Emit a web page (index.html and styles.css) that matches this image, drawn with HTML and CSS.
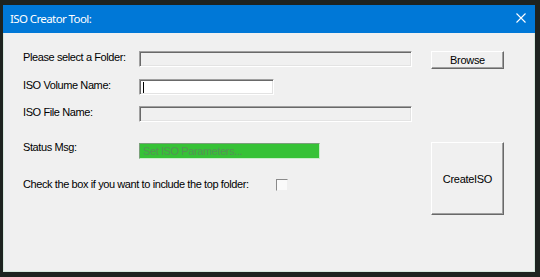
FILE: index.html
```html
<!DOCTYPE html>
<html lang="en">
<head>
  <meta charset="UTF-8">
  <title>ISO Creator Tool:</title>
  <link rel="stylesheet" href="styles.css">
</head>
<body>
  <div class="window">
    <div class="titlebar">
      <span class="title">ISO Creator Tool:</span>
      <svg class="close" width="10" height="10" viewBox="0 0 10 10">
        <path d="M0.5 0.5 L9.5 9.5 M9.5 0.5 L0.5 9.5" stroke="#fff" stroke-width="1.1" fill="none"/>
      </svg>
    </div>

    <div class="form">
      <label class="lbl">Please select a Folder:</label>
      <div class="field disabled"></div>
      <button class="btn browse">Browse</button>

      <label class="lbl">ISO Volume Name:</label>
      <div class="field volume"><span class="caret"></span></div>

      <label class="lbl">ISO File Name:</label>
      <div class="field disabled"></div>

      <label class="lbl">Status Msg:</label>
      <div class="field status">Set ISO Parameters...</div>
      <button class="btn create">CreateISO</button>

      <label class="lbl">Check the box if you want to include the top folder:</label>
      <span class="check"></span>
    </div>
  </div>
</body>
</html>
```

FILE: styles.css
```css
body {
  margin: 0;
  padding: 5px 0 0 3px;
  background-color: #1e2320;
  font-family: "Liberation Sans", Arial, sans-serif;
  font-size: 11px;
  letter-spacing: -0.4px;
  color: #000;
}

.window {
  width: 532px;
  height: 267px;
  background-color: #f0f0f0;
  box-sizing: border-box;
  border: 1px solid #d6e8de;
  border-top: none;
}

.titlebar {
  height: 28px;
  margin: 0 -1px;
  background-color: #0078d7;
  display: flex;
  align-items: center;
  justify-content: space-between;
  padding: 0 9px 0 7px;
}

.title {
  font-family: "Noto Sans", sans-serif;
  font-size: 11.5px;
  letter-spacing: -0.6px;
  color: #fff;
  margin-top: -1px;
}

.close {
  display: block;
  margin-top: -2px;
}

.form {
  display: grid;
  grid-template-columns: 116px 273px 19px 73px;
  grid-template-rows: 28px 27px 35px 37px 30px;
  align-items: start;
  padding: 18px 0 0 19px;
}

.lbl {
  grid-column: 1;
  line-height: 13px;
  white-space: nowrap;
}

.field {
  grid-column: 2;
  height: 16px;
  box-sizing: border-box;
  border: 1px solid;
  border-color: #a0a0a0 #fff #fff #a0a0a0;
  box-shadow: inset 1px 1px 0 #696969, inset -1px -1px 0 #e3e3e3;
}

.field.disabled {
  background-color: #f0f0f0;
}

.field.volume {
  width: 135px;
  background-color: #fff;
  padding: 2px 0 0 3px;
}

.caret {
  display: block;
  width: 1px;
  height: 11px;
  background-color: #000;
}

.field.status {
  width: 181px;
  margin-top: 2px;
  background-color: #36c236;
  border-color: #7aa07a #c8eec8 #c8eec8 #7aa07a;
  box-shadow: none;
  color: #559255;
  line-height: 14px;
  padding-left: 3px;
}

.btn {
  grid-column: 4;
  font-family: "Liberation Sans", Arial, sans-serif;
  font-size: 11px;
  letter-spacing: -0.3px;
  background-color: #f0f0f0;
  border: 1px solid;
  border-color: #fff #696969 #696969 #fff;
  box-shadow: inset -1px -1px 0 #a0a0a0;
  padding: 0;
  color: #000;
}

.btn.browse {
  height: 18px;
}

.btn.create {
  grid-row: 4 / span 2;
  height: 73px;
  margin-top: 1px;
}

.check {
  grid-column: 2;
  width: 12px;
  height: 12px;
  margin: 1px 0 0 137px;
  box-sizing: border-box;
  border: 1px solid;
  border-color: #8a8a8a #f0f0f0 #f0f0f0 #8a8a8a;
  background-color: #fafafa;
}
```
